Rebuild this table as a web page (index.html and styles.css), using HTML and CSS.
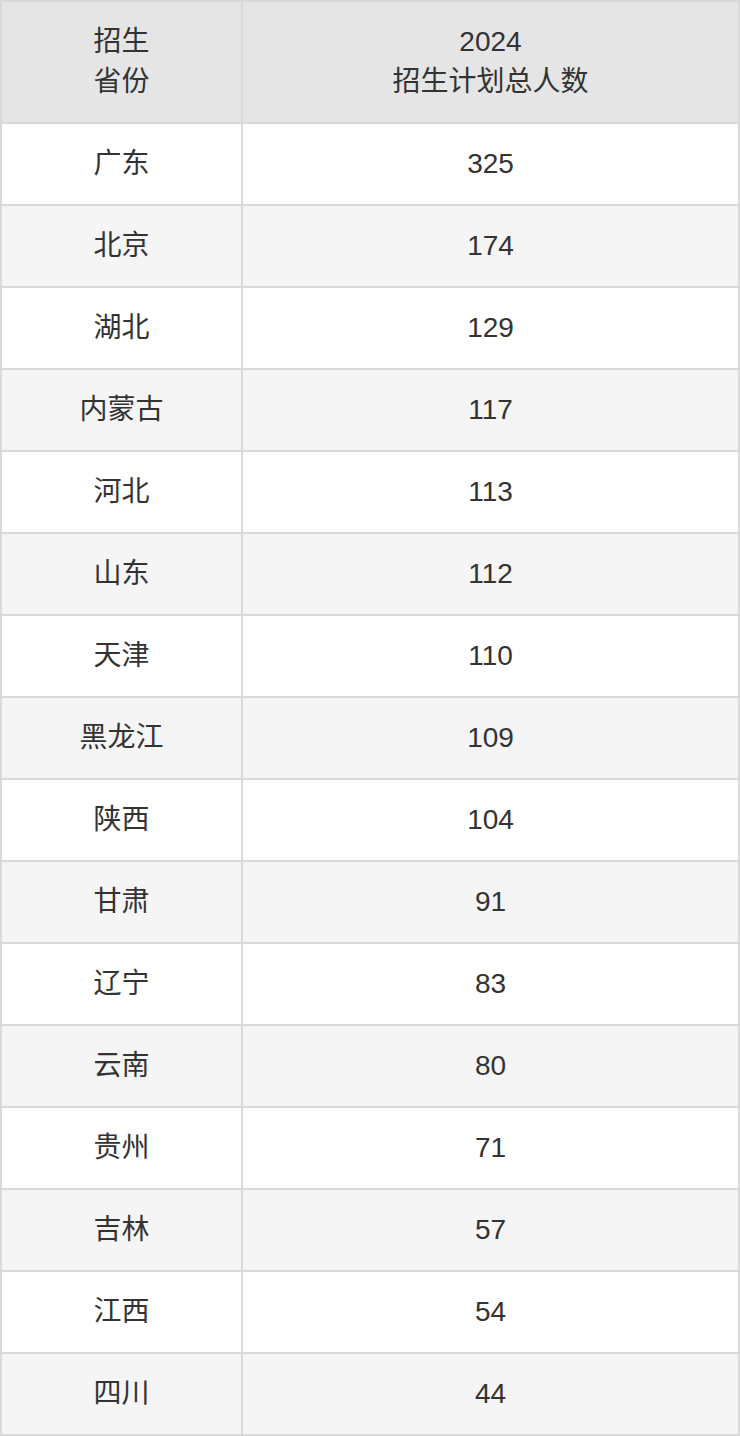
FILE: index.html
```html
<!DOCTYPE html>
<html lang="zh">
<head>
<meta charset="utf-8">
<title>招生计划</title>
<link rel="stylesheet" href="styles.css">
</head>
<body>
<div class="table">
  <div class="cell head">招生<br>省份</div>
  <div class="cell head">2024<br>招生计划总人数</div>
  <div class="cell">广东</div><div class="cell">325</div>
  <div class="cell alt">北京</div><div class="cell alt">174</div>
  <div class="cell">湖北</div><div class="cell">129</div>
  <div class="cell alt">内蒙古</div><div class="cell alt">117</div>
  <div class="cell">河北</div><div class="cell">113</div>
  <div class="cell alt">山东</div><div class="cell alt">112</div>
  <div class="cell">天津</div><div class="cell">110</div>
  <div class="cell alt">黑龙江</div><div class="cell alt">109</div>
  <div class="cell">陕西</div><div class="cell">104</div>
  <div class="cell alt">甘肃</div><div class="cell alt">91</div>
  <div class="cell">辽宁</div><div class="cell">83</div>
  <div class="cell alt">云南</div><div class="cell alt">80</div>
  <div class="cell">贵州</div><div class="cell">71</div>
  <div class="cell alt">吉林</div><div class="cell alt">57</div>
  <div class="cell">江西</div><div class="cell">54</div>
  <div class="cell alt">四川</div><div class="cell alt">44</div>
</div>
</body>
</html>
```
FILE: styles.css
```css
html, body {
  margin: 0;
  padding: 0;
  background: #ffffff;
}
.table {
  width: 740px;
  box-sizing: border-box;
  display: grid;
  grid-template-columns: 239px 1fr;
  grid-template-rows: 120px;
  grid-auto-rows: 80px;
  gap: 2px;
  padding: 2px;
  background: #d9d9d9;
  font-family: "Liberation Sans", "Noto Sans CJK SC", sans-serif;
  font-size: 28px;
  line-height: 40px;
  color: #333333;
}
.cell {
  background: #ffffff;
  display: flex;
  align-items: center;
  justify-content: center;
  text-align: center;
}
.cell.head {
  background: #e5e5e5;
}
.cell.alt {
  background: #f5f5f5;
}
```
